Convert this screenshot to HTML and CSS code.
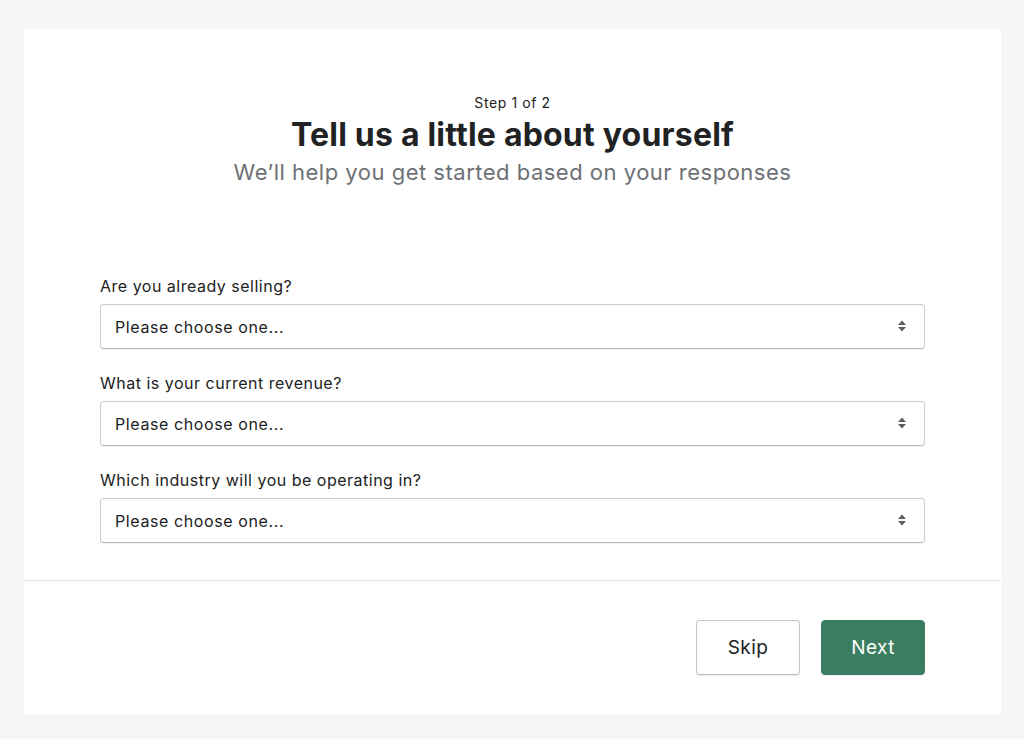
FILE: index.html
```html
<!DOCTYPE html>
<html lang="en">
<head>
  <meta charset="UTF-8" />
  <title>Tell us a little about yourself</title>
  <link rel="stylesheet" href="styles.css">
</head>
<body>

<div class="card">
  <div class="card-body">
    <div class="intro">
      <div class="step">Step 1 of 2</div>
      <h1>Tell us a little about yourself</h1>
      <p class="sub">We’ll help you get started based on your responses</p>
    </div>

    <div class="field">
      <label for="selling">Are you already selling?</label>
      <div class="select-wrap">
        <select id="selling">
          <option>Please choose one...</option>
        </select>
        <svg class="arrows" width="10" height="12" viewBox="0 0 10 12"><path d="M5 0.5 L9 5 H1 Z M1 7 H9 L5 11.5 Z" fill="#5c5f62"/></svg>
      </div>
    </div>

    <div class="field">
      <label for="revenue">What is your current revenue?</label>
      <div class="select-wrap">
        <select id="revenue">
          <option>Please choose one...</option>
        </select>
        <svg class="arrows" width="10" height="12" viewBox="0 0 10 12"><path d="M5 0.5 L9 5 H1 Z M1 7 H9 L5 11.5 Z" fill="#5c5f62"/></svg>
      </div>
    </div>

    <div class="field">
      <label for="industry">Which industry will you be operating in?</label>
      <div class="select-wrap">
        <select id="industry">
          <option>Please choose one...</option>
        </select>
        <svg class="arrows" width="10" height="12" viewBox="0 0 10 12"><path d="M5 0.5 L9 5 H1 Z M1 7 H9 L5 11.5 Z" fill="#5c5f62"/></svg>
      </div>
    </div>
  </div>

  <div class="card-footer">
    <button class="btn">Skip</button>
    <button class="btn primary">Next</button>
  </div>
</div>

</body>
</html>
```

FILE: styles.css
```css
body {
  margin: 0;
  padding: 29px 23px 25px 24px;
  background-color: #f6f6f7;
  font-family: Inter, "Noto Sans", sans-serif;
  color: #202223;
}

.card {
  background: #fff;
  height: 685px;
  display: flex;
  flex-direction: column;
}

.card-body {
  padding: 64px 76px 37px;
  border-bottom: 1px solid #e1e3e5;
}

.intro {
  text-align: center;
  margin-bottom: 89px;
}

.step {
  font-size: 14px;
  line-height: 20px;
  letter-spacing: 0.6px;
}

h1 {
  margin: 0;
  font-size: 32px;
  line-height: 44px;
  font-weight: 700;
  letter-spacing: 0.2px;
}

.sub {
  margin: 0;
  font-size: 22px;
  line-height: 30px;
  color: #6d7175;
  letter-spacing: 0.5px;
}

.field {
  margin-bottom: 24px;
}

.field:last-child {
  margin-bottom: 0;
}

.field label {
  display: block;
  font-size: 16px;
  line-height: 20px;
  margin-bottom: 8px;
  color: #202223;
  letter-spacing: 0.5px;
}

.select-wrap {
  position: relative;
}

.select-wrap select {
  appearance: none;
  -webkit-appearance: none;
  width: 100%;
  height: 45px;
  padding: 0 40px 0 14px;
  font-family: inherit;
  font-size: 16px;
  letter-spacing: 0.6px;
  color: #202223;
  background: #fff;
  border: 1px solid #c9cccf;
  border-bottom-color: #b5b8bb;
  border-radius: 4px;
  box-shadow: 0 1px 1px rgba(0,0,0,0.05);
}

.arrows {
  position: absolute;
  right: 18px;
  top: 16px;
  pointer-events: none;
}

.card-footer {
  flex: 1;
  display: flex;
  justify-content: flex-end;
  align-items: center;
  gap: 21px;
  padding: 0 76px;
}

.btn {
  width: 104px;
  height: 55px;
  font-family: inherit;
  font-size: 19px;
  letter-spacing: 0.4px;
  color: #202223;
  background: #fff;
  border: 1px solid #c4c6c9;
  border-bottom-color: #babfc3;
  border-radius: 4px;
  box-shadow: 0 1px 1px rgba(0,0,0,0.08);
  cursor: pointer;
}

.btn.primary {
  background: #3b7d60;
  border-color: #3b7d60;
  color: #fff;
}
```
